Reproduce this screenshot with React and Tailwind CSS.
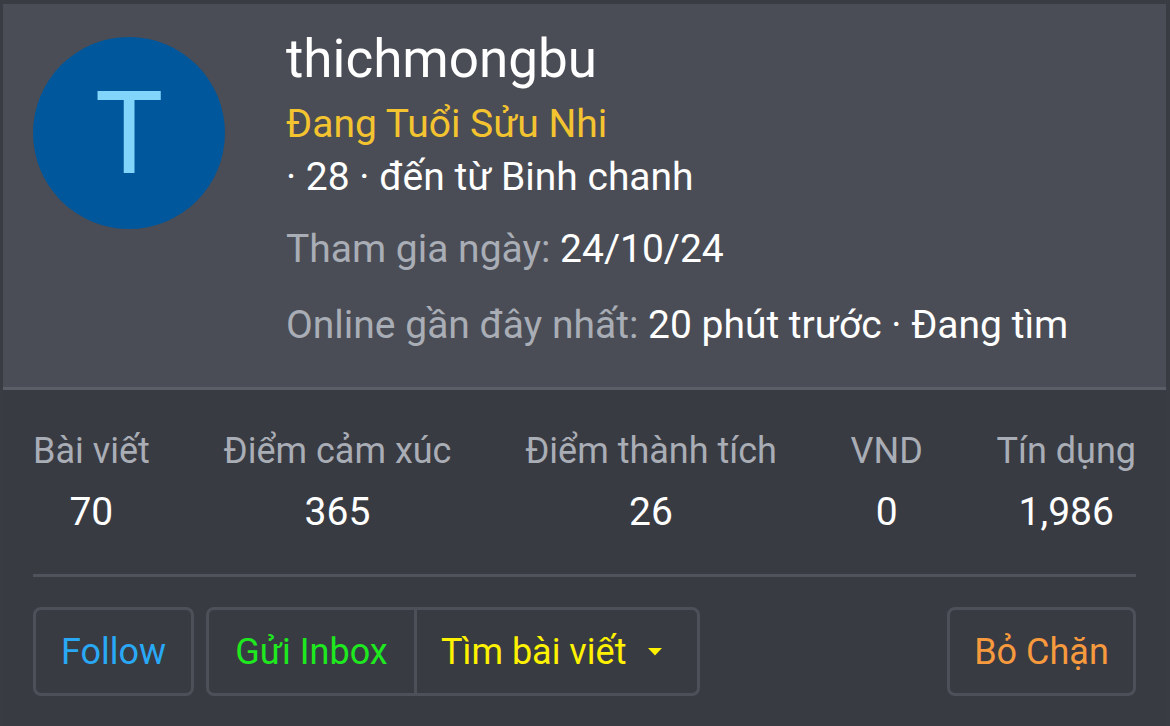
import React from 'react';

const stats = [
  { label: 'Bài viết', value: '70' },
  { label: 'Điểm cảm xúc', value: '365' },
  { label: 'Điểm thành tích', value: '26' },
  { label: 'VND', value: '0' },
  { label: 'Tín dụng', value: '1,986' },
];

export default function App() {
  return (
    <div className="w-[1170px] h-[726px] bg-[#3a3c43] pt-[4px] pl-[3px] pr-[4px] overflow-hidden" style={{ fontFamily: 'Roboto, sans-serif' }}>
      {/* profile header */}
      <div className="bg-[#4a4d55] h-[386px] flex items-start pl-[30px] pt-[24px] border-b-[3px] border-[#5b5e66]">
        <div className="w-[192px] h-[192px] mt-[9px] rounded-full bg-[#01579b] flex items-center justify-center shrink-0">
          <span className="text-[#81d4fa] text-[115px] leading-none">T</span>
        </div>
        <div className="ml-[61px] flex flex-col">
          <div className="text-white text-[53px] leading-[62px]">thichmongbu</div>
          <div className="text-[#f4c430] text-[39px] leading-[46px] mt-[11px]">Đang Tuổi Sửu Nhi</div>
          <div className="text-white text-[39px] leading-[46px] mt-[7px]">· 28 · đến từ Binh chanh</div>
          <div className="text-[39px] leading-[46px] mt-[26px]">
            <span className="text-[#a9adb5]">Tham gia ngày: </span>
            <span className="text-white">24/10/24</span>
          </div>
          <div className="text-[39px] leading-[46px] mt-[30px]">
            <span className="text-[#a9adb5]">Online gần đây nhất: </span>
            <span className="text-white">20 phút trước · Đang tìm</span>
          </div>
        </div>
      </div>

      {/* stats + actions */}
      <div className="bg-[#393b43] h-[336px] px-[30px] pt-[40px]">
        <div className="flex justify-between">
          {stats.map((s) => (
            <div key={s.label} className="flex flex-col items-center">
              <div className="text-[#a9adb5] text-[36px] leading-[42px]">{s.label}</div>
              <div className="text-white text-[39px] leading-[46px] mt-[17px]">{s.value}</div>
            </div>
          ))}
        </div>
        <div className="h-[3px] bg-[#50535b] mt-[39px]" />
        <div className="flex items-center justify-between mt-[30px]">
          <div className="flex gap-[12px]">
            <button className="h-[89px] w-[161px] flex items-center justify-center rounded-[8px] border-[3px] border-[#4d5058] text-[#29a9f5] text-[36px]">Follow</button>
            <div className="flex h-[89px] rounded-[8px] border-[3px] border-[#4d5058]">
              <button className="w-[205px] flex items-center justify-center text-[#1ee81e] text-[36px]">Gửi Inbox</button>
              <div className="w-[3px] bg-[#4d5058]" />
              <button className="w-[280px] pl-[24px] flex items-center gap-[22px] text-[#fff200] text-[36px]">
                Tìm bài viết
                <svg width="14" height="8" viewBox="0 0 14 8"><path d="M0 0h14L7 7.5z" fill="#fff200" /></svg>
              </button>
            </div>
          </div>
          <button className="h-[89px] w-[189px] flex items-center justify-center rounded-[8px] border-[3px] border-[#4d5058] text-[#f79a3e] text-[36px]">Bỏ Chặn</button>
        </div>
      </div>
    </div>
  );
}
